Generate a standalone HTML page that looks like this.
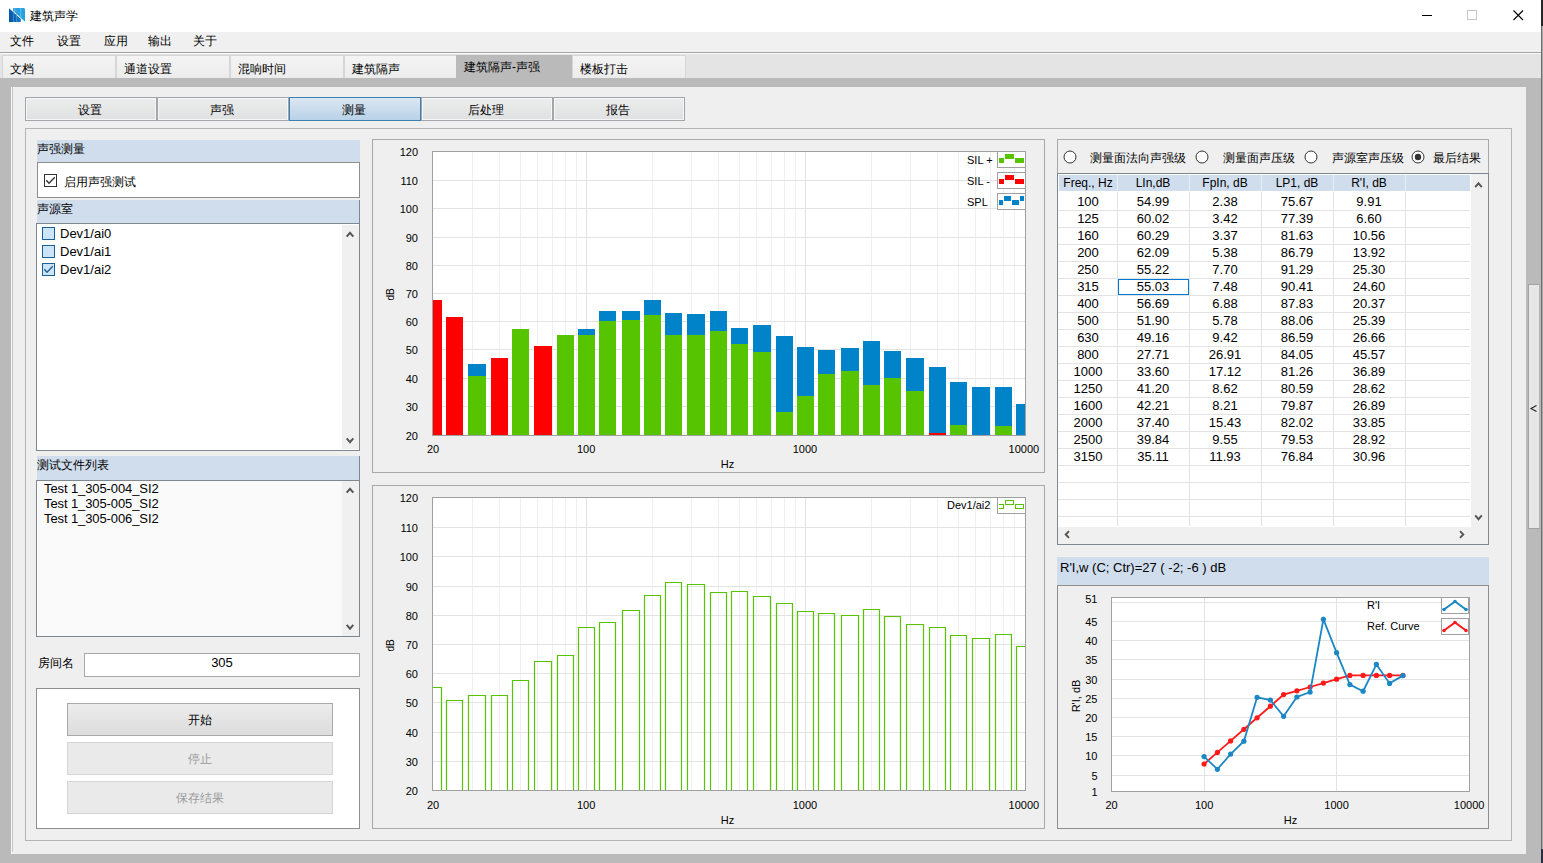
<!DOCTYPE html>
<html><head><meta charset="utf-8"><style>
html,body{margin:0;padding:0;}
body{width:1543px;height:863px;position:relative;overflow:hidden;background:#f0f0f0;font-family:"Liberation Sans",sans-serif;}
.t{position:absolute;white-space:nowrap;line-height:14px;}
</style></head><body>
<div style="position:absolute;left:0px;top:0px;width:1541px;height:32px;background:#fff"></div><svg style="position:absolute;left:9px;top:8px" width="16" height="14" viewBox="0 0 16 14">
<defs><linearGradient id="gd" x1="0" x2="1"><stop offset="0" stop-color="#0756a6"/><stop offset="1" stop-color="#137ac6"/></linearGradient></defs>
<polygon points="0,0.2 11.8,11.0 11.8,14 0,14" fill="url(#gd)"/>
<polygon points="4,2.4 4,0 15,0 16,1 16,13.8" fill="#26a2e0"/>
<rect x="4.1" y="0" width="0.8" height="14" fill="#5b9bd6" opacity="0.8"/>
<rect x="7.2" y="0" width="0.8" height="14" fill="#5b9bd6" opacity="0.8"/>
<rect x="5.4" y="0" width="0.8" height="5" fill="#7cc6ee" opacity="0.9"/>
<rect x="11.4" y="0" width="0.8" height="11" fill="#7cc6ee" opacity="0.9"/>
<polygon points="-1,-1 4,-1 4,2.5 16,13 16,15 11.8,15 11.8,10.6 0,0.3" fill="#fff" opacity="0"/>
</svg><div class="t" style="left:30px;top:9px;font-size:12px;color:#000;">建筑声学</div><div style="position:absolute;left:1422px;top:15px;width:10px;height:1px;background:#000"></div><div style="position:absolute;left:1467px;top:10px;width:10px;height:10px;border:1px solid #c6c6c6;box-sizing:border-box"></div><svg style="position:absolute;left:1513px;top:10px" width="11" height="11"><path d="M0.5 0.5 L10 10 M10 0.5 L0.5 10" stroke="#000" stroke-width="1.1"/></svg><div style="position:absolute;left:1541px;top:0px;width:1px;height:863px;background:#6e6e6e"></div><div style="position:absolute;left:1542px;top:0px;width:1px;height:863px;background:#a8a8a8"></div><div style="position:absolute;left:1541px;top:0px;width:2px;height:26px;background:#262626"></div><div style="position:absolute;left:1541px;top:849px;width:2px;height:14px;background:#2b2d42"></div><div style="position:absolute;left:0px;top:32px;width:1541px;height:20px;background:#f0f0f0"></div><div class="t" style="left:10px;top:34px;font-size:12px;color:#000;">文件</div><div class="t" style="left:57px;top:34px;font-size:12px;color:#000;">设置</div><div class="t" style="left:104px;top:34px;font-size:12px;color:#000;">应用</div><div class="t" style="left:148px;top:34px;font-size:12px;color:#000;">输出</div><div class="t" style="left:193px;top:34px;font-size:12px;color:#000;">关于</div><div style="position:absolute;left:0px;top:52px;width:1541px;height:1px;background:#a3a3a3"></div><div style="position:absolute;left:0px;top:53px;width:1541px;height:25px;background:#e4e4e4"></div><div style="position:absolute;left:0px;top:53px;width:1541px;height:1px;background:#fbfbfb"></div><div style="position:absolute;left:0px;top:78px;width:1541px;height:785px;background:#bababa"></div><div style="position:absolute;left:2px;top:55px;width:114px;height:23px;background:linear-gradient(#f4f4f4,#ececec);border:1px solid #d6d6d6;border-bottom:none;box-sizing:border-box"></div><div class="t" style="left:10px;top:62px;font-size:12px;color:#000;">文档</div><div style="position:absolute;left:116px;top:55px;width:114px;height:23px;background:linear-gradient(#f4f4f4,#ececec);border:1px solid #d6d6d6;border-bottom:none;box-sizing:border-box"></div><div class="t" style="left:124px;top:62px;font-size:12px;color:#000;">通道设置</div><div style="position:absolute;left:230px;top:55px;width:114px;height:23px;background:linear-gradient(#f4f4f4,#ececec);border:1px solid #d6d6d6;border-bottom:none;box-sizing:border-box"></div><div class="t" style="left:238px;top:62px;font-size:12px;color:#000;">混响时间</div><div style="position:absolute;left:344px;top:55px;width:114px;height:23px;background:linear-gradient(#f4f4f4,#ececec);border:1px solid #d6d6d6;border-bottom:none;box-sizing:border-box"></div><div class="t" style="left:352px;top:62px;font-size:12px;color:#000;">建筑隔声</div><div style="position:absolute;left:572px;top:55px;width:114px;height:23px;background:linear-gradient(#f4f4f4,#ececec);border:1px solid #d6d6d6;border-bottom:none;box-sizing:border-box"></div><div class="t" style="left:580px;top:62px;font-size:12px;color:#000;">楼板打击</div><div style="position:absolute;left:456px;top:55px;width:116px;height:23px;background:#bababa"></div><div class="t" style="left:464px;top:60px;font-size:12px;color:#000;">建筑隔声-声强</div><div style="position:absolute;left:11px;top:87px;width:1515px;height:767px;background:#efefef"></div><div style="position:absolute;left:11px;top:87px;width:1px;height:767px;background:#fafafa"></div><div style="position:absolute;left:12px;top:87px;width:1px;height:765px;background:#c4c4c4"></div><div style="position:absolute;left:25px;top:97px;width:132px;height:24px;background:linear-gradient(#ededed,#dfe0e1);border:1px solid #a2a6aa;box-shadow:inset 0 0 0 1px #f6f6f6;box-sizing:border-box"></div><div class="t" style="left:24px;top:103px;width:132px;text-align:center;font-size:12px;color:#000;z-index:3">设置</div><div style="position:absolute;left:157px;top:97px;width:132px;height:24px;background:linear-gradient(#ededed,#dfe0e1);border:1px solid #a2a6aa;box-shadow:inset 0 0 0 1px #f6f6f6;box-sizing:border-box"></div><div class="t" style="left:156px;top:103px;width:132px;text-align:center;font-size:12px;color:#000;z-index:3">声强</div><div style="position:absolute;left:289px;top:97px;width:132px;height:24px;background:linear-gradient(#dce7f3,#b9d1e8);border:1px solid #3c7fb1;box-sizing:border-box;z-index:2"></div><div class="t" style="left:288px;top:103px;width:132px;text-align:center;font-size:12px;color:#000;z-index:3">测量</div><div style="position:absolute;left:421px;top:97px;width:132px;height:24px;background:linear-gradient(#ededed,#dfe0e1);border:1px solid #a2a6aa;box-shadow:inset 0 0 0 1px #f6f6f6;box-sizing:border-box"></div><div class="t" style="left:420px;top:103px;width:132px;text-align:center;font-size:12px;color:#000;z-index:3">后处理</div><div style="position:absolute;left:553px;top:97px;width:132px;height:24px;background:linear-gradient(#ededed,#dfe0e1);border:1px solid #a2a6aa;box-shadow:inset 0 0 0 1px #f6f6f6;box-sizing:border-box"></div><div class="t" style="left:552px;top:103px;width:132px;text-align:center;font-size:12px;color:#000;z-index:3">报告</div><div style="position:absolute;left:25px;top:128px;width:1487px;height:713px;border:1px solid #b4b4b4;box-sizing:border-box"></div><div style="position:absolute;left:37px;top:140px;width:323px;height:22px;background:#cfdded"></div><div class="t" style="left:37px;top:142px;font-size:12px;color:#000;">声强测量</div><div style="position:absolute;left:37px;top:162px;width:323px;height:36px;background:#fff;border:1px solid #8e8e8e;box-sizing:border-box"></div><div style="position:absolute;left:44px;top:174px;width:13px;height:13px;background:#fff;border:1px solid #333;box-sizing:border-box"></div><svg style="position:absolute;left:44px;top:174px" width="13" height="13"><path d="M2.3 6.3 L5 9.2 L10.8 3.2" stroke="#333" stroke-width="1.35" fill="none"/></svg><div class="t" style="left:64px;top:175px;font-size:12px;color:#000;">启用声强测试</div><div style="position:absolute;left:37px;top:200px;width:323px;height:23px;background:#cfdded"></div><div class="t" style="left:37px;top:202px;font-size:12px;color:#000;">声源室</div><div style="position:absolute;left:36px;top:223px;width:324px;height:228px;background:#fff;border:1px solid #7f8790;box-sizing:border-box"></div><div style="position:absolute;left:359px;top:200px;width:1px;height:23px;background:#7f8790"></div><div style="position:absolute;left:342px;top:225px;width:17px;height:224px;background:#f0f0f0"></div><svg style="position:absolute;left:0;top:0;overflow:visible" width="1" height="1"><path d="M346.7 236.7 L350 232.8 L353.3 236.7" stroke="#555" stroke-width="1.9" fill="none"/></svg><svg style="position:absolute;left:0;top:0;overflow:visible" width="1" height="1"><path d="M346.7 438.3 L350 442.2 L353.3 438.3" stroke="#555" stroke-width="1.9" fill="none"/></svg><div style="position:absolute;left:42px;top:227px;width:13px;height:13px;background:#cce4f7;border:1px solid #1d5e98;box-sizing:border-box"></div><div class="t" style="left:60px;top:227px;font-size:13px;color:#000;">Dev1/ai0</div><div style="position:absolute;left:42px;top:245px;width:13px;height:13px;background:#cce4f7;border:1px solid #1d5e98;box-sizing:border-box"></div><div class="t" style="left:60px;top:245px;font-size:13px;color:#000;">Dev1/ai1</div><div style="position:absolute;left:42px;top:263px;width:13px;height:13px;background:#cce4f7;border:1px solid #1d5e98;box-sizing:border-box"></div><svg style="position:absolute;left:42px;top:263px" width="13" height="13"><path d="M2.3 6.3 L5 9.2 L10.8 3.2" stroke="#1d5e98" stroke-width="1.35" fill="none"/></svg><div class="t" style="left:60px;top:263px;font-size:13px;color:#000;">Dev1/ai2</div><div style="position:absolute;left:37px;top:456px;width:323px;height:24px;background:#cfdded"></div><div class="t" style="left:37px;top:458px;font-size:12px;color:#000;">测试文件列表</div><div style="position:absolute;left:36px;top:480px;width:324px;height:157px;background:#fafafa;border:1px solid #7f8790;box-sizing:border-box"></div><div style="position:absolute;left:342px;top:481px;width:17px;height:155px;background:#f0f0f0"></div><div style="position:absolute;left:359px;top:456px;width:1px;height:24px;background:#7f8790"></div><svg style="position:absolute;left:0;top:0;overflow:visible" width="1" height="1"><path d="M346.7 492.7 L350 488.8 L353.3 492.7" stroke="#555" stroke-width="1.9" fill="none"/></svg><svg style="position:absolute;left:0;top:0;overflow:visible" width="1" height="1"><path d="M346.7 624.8 L350 628.7 L353.3 624.8" stroke="#555" stroke-width="1.9" fill="none"/></svg><div class="t" style="left:44px;top:482px;font-size:13px;color:#000;letter-spacing:-0.1px">Test 1_305-004_SI2</div><div class="t" style="left:44px;top:497px;font-size:13px;color:#000;letter-spacing:-0.1px">Test 1_305-005_SI2</div><div class="t" style="left:44px;top:512px;font-size:13px;color:#000;letter-spacing:-0.1px">Test 1_305-006_SI2</div><div class="t" style="left:38px;top:656px;font-size:12px;color:#000;">房间名</div><div style="position:absolute;left:84px;top:653px;width:276px;height:24px;background:#fff;border:1px solid #a8a8a8;box-sizing:border-box"></div><div class="t" style="left:84px;top:656px;width:276px;text-align:center;font-size:13px;color:#000;">305</div><div style="position:absolute;left:36px;top:688px;width:324px;height:141px;background:#fff;border:1px solid #8e8e8e;box-sizing:border-box"></div><div style="position:absolute;left:67px;top:703px;width:266px;height:33px;background:linear-gradient(#ececec,#dcdcdc);border:1px solid #a9a9a9;box-sizing:border-box"></div><div class="t" style="left:67px;top:713px;width:266px;text-align:center;font-size:12px;color:#000;">开始</div><div style="position:absolute;left:67px;top:742px;width:266px;height:33px;background:#eaeaea;border:1px solid #d5d5d5;box-sizing:border-box"></div><div class="t" style="left:67px;top:752px;width:266px;text-align:center;font-size:12px;color:#9a9a9a;">停止</div><div style="position:absolute;left:67px;top:781px;width:266px;height:33px;background:#eaeaea;border:1px solid #d5d5d5;box-sizing:border-box"></div><div class="t" style="left:67px;top:791px;width:266px;text-align:center;font-size:12px;color:#9a9a9a;">保存结果</div><div style="position:absolute;left:372px;top:139px;width:673px;height:334px;border:1px solid #a8a8a8;box-sizing:border-box"></div><div style="position:absolute;left:372px;top:485px;width:673px;height:344px;border:1px solid #a8a8a8;box-sizing:border-box"></div><div style="position:absolute;left:1057px;top:139px;width:432px;height:35px;border:1px solid #a8a8a8;box-sizing:border-box"></div><svg style="position:absolute;left:1063px;top:150px" width="14" height="14"><circle cx="7" cy="7" r="6" fill="#fff" stroke="#333" stroke-width="1"/></svg><div class="t" style="left:1090px;top:151px;font-size:12px;color:#000;">测量面法向声强级</div><svg style="position:absolute;left:1195px;top:150px" width="14" height="14"><circle cx="7" cy="7" r="6" fill="#fff" stroke="#333" stroke-width="1"/></svg><div class="t" style="left:1223px;top:151px;font-size:12px;color:#000;">测量面声压级</div><svg style="position:absolute;left:1304px;top:150px" width="14" height="14"><circle cx="7" cy="7" r="6" fill="#fff" stroke="#333" stroke-width="1"/></svg><div class="t" style="left:1332px;top:151px;font-size:12px;color:#000;">声源室声压级</div><svg style="position:absolute;left:1411px;top:150px" width="14" height="14"><circle cx="7" cy="7" r="6" fill="#fff" stroke="#333" stroke-width="1"/><circle cx="7" cy="7" r="3.2" fill="#333"/></svg><div class="t" style="left:1433px;top:151px;font-size:12px;color:#000;">最后结果</div><div style="position:absolute;left:1057px;top:173px;width:432px;height:372px;background:#fff;border:1px solid #7f8790;box-sizing:border-box"></div><div style="position:absolute;left:1058px;top:174px;width:413px;height:18px;background:#fff"></div><div style="position:absolute;left:1059px;top:175px;width:411px;height:16px;background:#cfdded"></div><div class="t" style="left:1059px;top:176px;width:58px;text-align:center;font-size:12px;color:#000;">Freq., Hz</div><div style="position:absolute;left:1117px;top:175px;width:1px;height:16px;background:#e6eef7"></div><div class="t" style="left:1117px;top:176px;width:72px;text-align:center;font-size:12px;color:#000;">LIn,dB</div><div style="position:absolute;left:1189px;top:175px;width:1px;height:16px;background:#e6eef7"></div><div class="t" style="left:1189px;top:176px;width:72px;text-align:center;font-size:12px;color:#000;">FpIn, dB</div><div style="position:absolute;left:1261px;top:175px;width:1px;height:16px;background:#e6eef7"></div><div class="t" style="left:1261px;top:176px;width:72px;text-align:center;font-size:12px;color:#000;">LP1, dB</div><div style="position:absolute;left:1333px;top:175px;width:1px;height:16px;background:#e6eef7"></div><div class="t" style="left:1333px;top:176px;width:72px;text-align:center;font-size:12px;color:#000;">R'I, dB</div><div style="position:absolute;left:1405px;top:175px;width:1px;height:16px;background:#e6eef7"></div><div class="t" style="left:1405px;top:176px;width:65px;text-align:center;font-size:12px;color:#000;"></div><div style="position:absolute;left:1058px;top:210px;width:412px;height:1px;background:#e3e3e3"></div><div style="position:absolute;left:1058px;top:227px;width:412px;height:1px;background:#e3e3e3"></div><div style="position:absolute;left:1058px;top:244px;width:412px;height:1px;background:#e3e3e3"></div><div style="position:absolute;left:1058px;top:261px;width:412px;height:1px;background:#e3e3e3"></div><div style="position:absolute;left:1058px;top:278px;width:412px;height:1px;background:#e3e3e3"></div><div style="position:absolute;left:1058px;top:295px;width:412px;height:1px;background:#e3e3e3"></div><div style="position:absolute;left:1058px;top:312px;width:412px;height:1px;background:#e3e3e3"></div><div style="position:absolute;left:1058px;top:329px;width:412px;height:1px;background:#e3e3e3"></div><div style="position:absolute;left:1058px;top:346px;width:412px;height:1px;background:#e3e3e3"></div><div style="position:absolute;left:1058px;top:363px;width:412px;height:1px;background:#e3e3e3"></div><div style="position:absolute;left:1058px;top:380px;width:412px;height:1px;background:#e3e3e3"></div><div style="position:absolute;left:1058px;top:397px;width:412px;height:1px;background:#e3e3e3"></div><div style="position:absolute;left:1058px;top:414px;width:412px;height:1px;background:#e3e3e3"></div><div style="position:absolute;left:1058px;top:431px;width:412px;height:1px;background:#e3e3e3"></div><div style="position:absolute;left:1058px;top:448px;width:412px;height:1px;background:#e3e3e3"></div><div style="position:absolute;left:1058px;top:465px;width:412px;height:1px;background:#e3e3e3"></div><div style="position:absolute;left:1058px;top:482px;width:412px;height:1px;background:#e3e3e3"></div><div style="position:absolute;left:1058px;top:499px;width:412px;height:1px;background:#e3e3e3"></div><div style="position:absolute;left:1058px;top:516px;width:412px;height:1px;background:#e3e3e3"></div><div style="position:absolute;left:1117px;top:192px;width:1px;height:334px;background:#e3e3e3"></div><div style="position:absolute;left:1189px;top:192px;width:1px;height:334px;background:#e3e3e3"></div><div style="position:absolute;left:1261px;top:192px;width:1px;height:334px;background:#e3e3e3"></div><div style="position:absolute;left:1333px;top:192px;width:1px;height:334px;background:#e3e3e3"></div><div style="position:absolute;left:1405px;top:192px;width:1px;height:334px;background:#e3e3e3"></div><div class="t" style="left:1059px;top:195px;width:58px;text-align:center;font-size:13px;color:#000;">100</div><div class="t" style="left:1117px;top:195px;width:72px;text-align:center;font-size:13px;color:#000;">54.99</div><div class="t" style="left:1189px;top:195px;width:72px;text-align:center;font-size:13px;color:#000;">2.38</div><div class="t" style="left:1261px;top:195px;width:72px;text-align:center;font-size:13px;color:#000;">75.67</div><div class="t" style="left:1333px;top:195px;width:72px;text-align:center;font-size:13px;color:#000;">9.91</div><div class="t" style="left:1059px;top:212px;width:58px;text-align:center;font-size:13px;color:#000;">125</div><div class="t" style="left:1117px;top:212px;width:72px;text-align:center;font-size:13px;color:#000;">60.02</div><div class="t" style="left:1189px;top:212px;width:72px;text-align:center;font-size:13px;color:#000;">3.42</div><div class="t" style="left:1261px;top:212px;width:72px;text-align:center;font-size:13px;color:#000;">77.39</div><div class="t" style="left:1333px;top:212px;width:72px;text-align:center;font-size:13px;color:#000;">6.60</div><div class="t" style="left:1059px;top:229px;width:58px;text-align:center;font-size:13px;color:#000;">160</div><div class="t" style="left:1117px;top:229px;width:72px;text-align:center;font-size:13px;color:#000;">60.29</div><div class="t" style="left:1189px;top:229px;width:72px;text-align:center;font-size:13px;color:#000;">3.37</div><div class="t" style="left:1261px;top:229px;width:72px;text-align:center;font-size:13px;color:#000;">81.63</div><div class="t" style="left:1333px;top:229px;width:72px;text-align:center;font-size:13px;color:#000;">10.56</div><div class="t" style="left:1059px;top:246px;width:58px;text-align:center;font-size:13px;color:#000;">200</div><div class="t" style="left:1117px;top:246px;width:72px;text-align:center;font-size:13px;color:#000;">62.09</div><div class="t" style="left:1189px;top:246px;width:72px;text-align:center;font-size:13px;color:#000;">5.38</div><div class="t" style="left:1261px;top:246px;width:72px;text-align:center;font-size:13px;color:#000;">86.79</div><div class="t" style="left:1333px;top:246px;width:72px;text-align:center;font-size:13px;color:#000;">13.92</div><div class="t" style="left:1059px;top:263px;width:58px;text-align:center;font-size:13px;color:#000;">250</div><div class="t" style="left:1117px;top:263px;width:72px;text-align:center;font-size:13px;color:#000;">55.22</div><div class="t" style="left:1189px;top:263px;width:72px;text-align:center;font-size:13px;color:#000;">7.70</div><div class="t" style="left:1261px;top:263px;width:72px;text-align:center;font-size:13px;color:#000;">91.29</div><div class="t" style="left:1333px;top:263px;width:72px;text-align:center;font-size:13px;color:#000;">25.30</div><div class="t" style="left:1059px;top:280px;width:58px;text-align:center;font-size:13px;color:#000;">315</div><div class="t" style="left:1117px;top:280px;width:72px;text-align:center;font-size:13px;color:#000;">55.03</div><div class="t" style="left:1189px;top:280px;width:72px;text-align:center;font-size:13px;color:#000;">7.48</div><div class="t" style="left:1261px;top:280px;width:72px;text-align:center;font-size:13px;color:#000;">90.41</div><div class="t" style="left:1333px;top:280px;width:72px;text-align:center;font-size:13px;color:#000;">24.60</div><div class="t" style="left:1059px;top:297px;width:58px;text-align:center;font-size:13px;color:#000;">400</div><div class="t" style="left:1117px;top:297px;width:72px;text-align:center;font-size:13px;color:#000;">56.69</div><div class="t" style="left:1189px;top:297px;width:72px;text-align:center;font-size:13px;color:#000;">6.88</div><div class="t" style="left:1261px;top:297px;width:72px;text-align:center;font-size:13px;color:#000;">87.83</div><div class="t" style="left:1333px;top:297px;width:72px;text-align:center;font-size:13px;color:#000;">20.37</div><div class="t" style="left:1059px;top:314px;width:58px;text-align:center;font-size:13px;color:#000;">500</div><div class="t" style="left:1117px;top:314px;width:72px;text-align:center;font-size:13px;color:#000;">51.90</div><div class="t" style="left:1189px;top:314px;width:72px;text-align:center;font-size:13px;color:#000;">5.78</div><div class="t" style="left:1261px;top:314px;width:72px;text-align:center;font-size:13px;color:#000;">88.06</div><div class="t" style="left:1333px;top:314px;width:72px;text-align:center;font-size:13px;color:#000;">25.39</div><div class="t" style="left:1059px;top:331px;width:58px;text-align:center;font-size:13px;color:#000;">630</div><div class="t" style="left:1117px;top:331px;width:72px;text-align:center;font-size:13px;color:#000;">49.16</div><div class="t" style="left:1189px;top:331px;width:72px;text-align:center;font-size:13px;color:#000;">9.42</div><div class="t" style="left:1261px;top:331px;width:72px;text-align:center;font-size:13px;color:#000;">86.59</div><div class="t" style="left:1333px;top:331px;width:72px;text-align:center;font-size:13px;color:#000;">26.66</div><div class="t" style="left:1059px;top:348px;width:58px;text-align:center;font-size:13px;color:#000;">800</div><div class="t" style="left:1117px;top:348px;width:72px;text-align:center;font-size:13px;color:#000;">27.71</div><div class="t" style="left:1189px;top:348px;width:72px;text-align:center;font-size:13px;color:#000;">26.91</div><div class="t" style="left:1261px;top:348px;width:72px;text-align:center;font-size:13px;color:#000;">84.05</div><div class="t" style="left:1333px;top:348px;width:72px;text-align:center;font-size:13px;color:#000;">45.57</div><div class="t" style="left:1059px;top:365px;width:58px;text-align:center;font-size:13px;color:#000;">1000</div><div class="t" style="left:1117px;top:365px;width:72px;text-align:center;font-size:13px;color:#000;">33.60</div><div class="t" style="left:1189px;top:365px;width:72px;text-align:center;font-size:13px;color:#000;">17.12</div><div class="t" style="left:1261px;top:365px;width:72px;text-align:center;font-size:13px;color:#000;">81.26</div><div class="t" style="left:1333px;top:365px;width:72px;text-align:center;font-size:13px;color:#000;">36.89</div><div class="t" style="left:1059px;top:382px;width:58px;text-align:center;font-size:13px;color:#000;">1250</div><div class="t" style="left:1117px;top:382px;width:72px;text-align:center;font-size:13px;color:#000;">41.20</div><div class="t" style="left:1189px;top:382px;width:72px;text-align:center;font-size:13px;color:#000;">8.62</div><div class="t" style="left:1261px;top:382px;width:72px;text-align:center;font-size:13px;color:#000;">80.59</div><div class="t" style="left:1333px;top:382px;width:72px;text-align:center;font-size:13px;color:#000;">28.62</div><div class="t" style="left:1059px;top:399px;width:58px;text-align:center;font-size:13px;color:#000;">1600</div><div class="t" style="left:1117px;top:399px;width:72px;text-align:center;font-size:13px;color:#000;">42.21</div><div class="t" style="left:1189px;top:399px;width:72px;text-align:center;font-size:13px;color:#000;">8.21</div><div class="t" style="left:1261px;top:399px;width:72px;text-align:center;font-size:13px;color:#000;">79.87</div><div class="t" style="left:1333px;top:399px;width:72px;text-align:center;font-size:13px;color:#000;">26.89</div><div class="t" style="left:1059px;top:416px;width:58px;text-align:center;font-size:13px;color:#000;">2000</div><div class="t" style="left:1117px;top:416px;width:72px;text-align:center;font-size:13px;color:#000;">37.40</div><div class="t" style="left:1189px;top:416px;width:72px;text-align:center;font-size:13px;color:#000;">15.43</div><div class="t" style="left:1261px;top:416px;width:72px;text-align:center;font-size:13px;color:#000;">82.02</div><div class="t" style="left:1333px;top:416px;width:72px;text-align:center;font-size:13px;color:#000;">33.85</div><div class="t" style="left:1059px;top:433px;width:58px;text-align:center;font-size:13px;color:#000;">2500</div><div class="t" style="left:1117px;top:433px;width:72px;text-align:center;font-size:13px;color:#000;">39.84</div><div class="t" style="left:1189px;top:433px;width:72px;text-align:center;font-size:13px;color:#000;">9.55</div><div class="t" style="left:1261px;top:433px;width:72px;text-align:center;font-size:13px;color:#000;">79.53</div><div class="t" style="left:1333px;top:433px;width:72px;text-align:center;font-size:13px;color:#000;">28.92</div><div class="t" style="left:1059px;top:450px;width:58px;text-align:center;font-size:13px;color:#000;">3150</div><div class="t" style="left:1117px;top:450px;width:72px;text-align:center;font-size:13px;color:#000;">35.11</div><div class="t" style="left:1189px;top:450px;width:72px;text-align:center;font-size:13px;color:#000;">11.93</div><div class="t" style="left:1261px;top:450px;width:72px;text-align:center;font-size:13px;color:#000;">76.84</div><div class="t" style="left:1333px;top:450px;width:72px;text-align:center;font-size:13px;color:#000;">30.96</div><div style="position:absolute;left:1118px;top:279px;width:71px;height:16px;border:1px solid #0078d7;box-sizing:border-box"></div><div style="position:absolute;left:1471px;top:174px;width:17px;height:353px;background:#f0f0f0"></div><div style="position:absolute;left:1058px;top:527px;width:430px;height:17px;background:#f0f0f0"></div><svg style="position:absolute;left:0;top:0;overflow:visible" width="1" height="1"><path d="M1475.2 187.2 L1478.5 183.3 L1481.8 187.2" stroke="#555" stroke-width="1.9" fill="none"/></svg><svg style="position:absolute;left:0;top:0;overflow:visible" width="1" height="1"><path d="M1475.2 515.3 L1478.5 519.2 L1481.8 515.3" stroke="#555" stroke-width="1.9" fill="none"/></svg><svg style="position:absolute;left:0;top:0;overflow:visible" width="1" height="1"><path d="M1069 531.2 L1065.7 534.5 L1069 537.8" stroke="#555" stroke-width="1.9" fill="none"/></svg><svg style="position:absolute;left:0;top:0;overflow:visible" width="1" height="1"><path d="M1460 531.2 L1463.3 534.5 L1460 537.8" stroke="#555" stroke-width="1.9" fill="none"/></svg><div style="position:absolute;left:1057px;top:557px;width:432px;height:28px;background:#cfdded"></div><div class="t" style="left:1060px;top:561px;font-size:13px;color:#000;">R'I,w (C; Ctr)=27 ( -2; -6 ) dB</div><div style="position:absolute;left:1057px;top:585px;width:432px;height:244px;border:1px solid #8e8e8e;box-sizing:border-box"></div><div style="position:absolute;left:1528px;top:284px;width:12px;height:245px;background:#e6e6e6;border:1px solid #a3a3a3;border-right-color:#b4b4b4;box-sizing:border-box"></div><svg style="position:absolute;left:0;top:0;overflow:visible" width="1" height="1"><path d="M1536.5 405.5 L1531 408.5 L1536.5 411.5" stroke="#222" stroke-width="1.1" fill="none"/></svg>
<svg style="position:absolute;left:0;top:0;font-family:'Liberation Sans',sans-serif" width="1543" height="863"><rect x="432" y="151" width="594" height="284" fill="#fff"/><line x1="472.5" y1="151" x2="472.5" y2="435" stroke="#efefef" stroke-width="1"/><line x1="499.5" y1="151" x2="499.5" y2="435" stroke="#efefef" stroke-width="1"/><line x1="520.5" y1="151" x2="520.5" y2="435" stroke="#efefef" stroke-width="1"/><line x1="537.5" y1="151" x2="537.5" y2="435" stroke="#efefef" stroke-width="1"/><line x1="552.5" y1="151" x2="552.5" y2="435" stroke="#efefef" stroke-width="1"/><line x1="565.5" y1="151" x2="565.5" y2="435" stroke="#efefef" stroke-width="1"/><line x1="576.5" y1="151" x2="576.5" y2="435" stroke="#efefef" stroke-width="1"/><line x1="586.5" y1="151" x2="586.5" y2="435" stroke="#e3e3e3" stroke-width="1"/><line x1="652.5" y1="151" x2="652.5" y2="435" stroke="#efefef" stroke-width="1"/><line x1="691.5" y1="151" x2="691.5" y2="435" stroke="#efefef" stroke-width="1"/><line x1="718.5" y1="151" x2="718.5" y2="435" stroke="#efefef" stroke-width="1"/><line x1="739.5" y1="151" x2="739.5" y2="435" stroke="#efefef" stroke-width="1"/><line x1="756.5" y1="151" x2="756.5" y2="435" stroke="#efefef" stroke-width="1"/><line x1="771.5" y1="151" x2="771.5" y2="435" stroke="#efefef" stroke-width="1"/><line x1="784.5" y1="151" x2="784.5" y2="435" stroke="#efefef" stroke-width="1"/><line x1="795.5" y1="151" x2="795.5" y2="435" stroke="#efefef" stroke-width="1"/><line x1="805.5" y1="151" x2="805.5" y2="435" stroke="#e3e3e3" stroke-width="1"/><line x1="871.5" y1="151" x2="871.5" y2="435" stroke="#efefef" stroke-width="1"/><line x1="910.5" y1="151" x2="910.5" y2="435" stroke="#efefef" stroke-width="1"/><line x1="937.5" y1="151" x2="937.5" y2="435" stroke="#efefef" stroke-width="1"/><line x1="958.5" y1="151" x2="958.5" y2="435" stroke="#efefef" stroke-width="1"/><line x1="975.5" y1="151" x2="975.5" y2="435" stroke="#efefef" stroke-width="1"/><line x1="990.5" y1="151" x2="990.5" y2="435" stroke="#efefef" stroke-width="1"/><line x1="1003.5" y1="151" x2="1003.5" y2="435" stroke="#efefef" stroke-width="1"/><line x1="1014.5" y1="151" x2="1014.5" y2="435" stroke="#efefef" stroke-width="1"/><line x1="432" y1="180.5" x2="1026" y2="180.5" stroke="#e3e3e3" stroke-width="1"/><line x1="432" y1="208.5" x2="1026" y2="208.5" stroke="#e3e3e3" stroke-width="1"/><line x1="432" y1="237.5" x2="1026" y2="237.5" stroke="#e3e3e3" stroke-width="1"/><line x1="432" y1="265.5" x2="1026" y2="265.5" stroke="#e3e3e3" stroke-width="1"/><line x1="432" y1="293.5" x2="1026" y2="293.5" stroke="#e3e3e3" stroke-width="1"/><line x1="432" y1="321.5" x2="1026" y2="321.5" stroke="#e3e3e3" stroke-width="1"/><line x1="432" y1="349.5" x2="1026" y2="349.5" stroke="#e3e3e3" stroke-width="1"/><line x1="432" y1="378.5" x2="1026" y2="378.5" stroke="#e3e3e3" stroke-width="1"/><line x1="432" y1="406.5" x2="1026" y2="406.5" stroke="#e3e3e3" stroke-width="1"/><g shape-rendering="crispEdges"><rect x="433" y="300" width="9" height="135" fill="#ff0000"/><rect x="446" y="317" width="17" height="118" fill="#ff0000"/><rect x="468" y="364" width="18" height="71" fill="#0083c8"/><rect x="468" y="376" width="18" height="59" fill="#56c500"/><rect x="491" y="358" width="17" height="77" fill="#ff0000"/><rect x="512" y="329" width="17" height="106" fill="#56c500"/><rect x="534" y="346" width="18" height="89" fill="#ff0000"/><rect x="557" y="335" width="17" height="100" fill="#56c500"/><rect x="578" y="329" width="17" height="106" fill="#0083c8"/><rect x="578" y="335" width="17" height="100" fill="#56c500"/><rect x="599" y="311" width="17" height="124" fill="#0083c8"/><rect x="599" y="321" width="17" height="114" fill="#56c500"/><rect x="622" y="311" width="18" height="124" fill="#0083c8"/><rect x="622" y="320" width="18" height="115" fill="#56c500"/><rect x="644" y="300" width="17" height="135" fill="#0083c8"/><rect x="644" y="315" width="17" height="120" fill="#56c500"/><rect x="665" y="313" width="17" height="122" fill="#0083c8"/><rect x="665" y="335" width="17" height="100" fill="#56c500"/><rect x="687" y="314" width="18" height="121" fill="#0083c8"/><rect x="687" y="335" width="18" height="100" fill="#56c500"/><rect x="710" y="311" width="17" height="124" fill="#0083c8"/><rect x="710" y="331" width="17" height="104" fill="#56c500"/><rect x="731" y="328" width="17" height="107" fill="#0083c8"/><rect x="731" y="344" width="17" height="91" fill="#56c500"/><rect x="753" y="325" width="18" height="110" fill="#0083c8"/><rect x="753" y="352" width="18" height="83" fill="#56c500"/><rect x="776" y="336" width="17" height="99" fill="#0083c8"/><rect x="776" y="412" width="17" height="23" fill="#56c500"/><rect x="797" y="347" width="17" height="88" fill="#0083c8"/><rect x="797" y="396" width="17" height="39" fill="#56c500"/><rect x="818" y="350" width="17" height="85" fill="#0083c8"/><rect x="818" y="374" width="17" height="61" fill="#56c500"/><rect x="841" y="348" width="18" height="87" fill="#0083c8"/><rect x="841" y="371" width="18" height="64" fill="#56c500"/><rect x="863" y="341" width="17" height="94" fill="#0083c8"/><rect x="863" y="385" width="17" height="50" fill="#56c500"/><rect x="884" y="351" width="17" height="84" fill="#0083c8"/><rect x="884" y="378" width="17" height="57" fill="#56c500"/><rect x="906" y="358" width="18" height="77" fill="#0083c8"/><rect x="906" y="391" width="18" height="44" fill="#56c500"/><rect x="929" y="367" width="17" height="68" fill="#0083c8"/><rect x="929" y="433" width="17" height="2" fill="#ff0000"/><rect x="950" y="382" width="17" height="53" fill="#0083c8"/><rect x="950" y="425" width="17" height="10" fill="#56c500"/><rect x="972" y="387" width="18" height="48" fill="#0083c8"/><rect x="995" y="387" width="17" height="48" fill="#0083c8"/><rect x="995" y="426" width="17" height="9" fill="#56c500"/><rect x="1016" y="404" width="9" height="31" fill="#0083c8"/><path d="M432.5 435 L432.5 151.5 L1025.5 151.5 L1025.5 435.5 L432 435.5" fill="none" stroke="#a0a0a0" stroke-width="1"/></g><text x="418" y="156" font-size="11" text-anchor="end" fill="#000" >120</text><text x="418" y="185" font-size="11" text-anchor="end" fill="#000" >110</text><text x="418" y="213" font-size="11" text-anchor="end" fill="#000" >100</text><text x="418" y="242" font-size="11" text-anchor="end" fill="#000" >90</text><text x="418" y="270" font-size="11" text-anchor="end" fill="#000" >80</text><text x="418" y="298" font-size="11" text-anchor="end" fill="#000" >70</text><text x="418" y="326" font-size="11" text-anchor="end" fill="#000" >60</text><text x="418" y="354" font-size="11" text-anchor="end" fill="#000" >50</text><text x="418" y="383" font-size="11" text-anchor="end" fill="#000" >40</text><text x="418" y="411" font-size="11" text-anchor="end" fill="#000" >30</text><text x="418" y="440" font-size="11" text-anchor="end" fill="#000" >20</text><text x="433.1" y="453" font-size="11" text-anchor="middle" fill="#000" >20</text><text x="586.1045339491545" y="453" font-size="11" text-anchor="middle" fill="#000" >100</text><text x="805.0045339491546" y="453" font-size="11" text-anchor="middle" fill="#000" >1000</text><text x="1023.9045339491546" y="453" font-size="11" text-anchor="middle" fill="#000" >10000</text><text x="727.5" y="468" font-size="11" text-anchor="middle" fill="#000" >Hz</text><text transform="translate(394,294.5) rotate(-90)" font-size="10" text-anchor="middle">dB</text><rect x="997.5" y="151.5" width="28" height="16" fill="#fff" stroke="#a0a0a0" stroke-width="1" shape-rendering="crispEdges"/><g shape-rendering="crispEdges" fill="#56c500"><rect x="999" y="158" width="5" height="5"/><rect x="1005" y="154" width="9" height="5"/><rect x="1015" y="158" width="9" height="5"/></g><text x="967" y="163.5" font-size="11" text-anchor="start" fill="#000" >SIL +</text><rect x="997.5" y="172.5" width="28" height="16" fill="#fff" stroke="#a0a0a0" stroke-width="1" shape-rendering="crispEdges"/><g shape-rendering="crispEdges" fill="#ff0000"><rect x="999" y="179" width="5" height="5"/><rect x="1005" y="175" width="9" height="5"/><rect x="1015" y="179" width="9" height="5"/></g><text x="967" y="184.5" font-size="11" text-anchor="start" fill="#000" >SIL -</text><rect x="997.5" y="193.5" width="28" height="16" fill="#fff" stroke="#a0a0a0" stroke-width="1" shape-rendering="crispEdges"/><g shape-rendering="crispEdges" fill="#0083c8"><rect x="999" y="200" width="4" height="5"/><rect x="1004" y="196" width="7" height="5"/><rect x="1012" y="200" width="7" height="5"/><rect x="1020" y="196" width="4" height="5"/></g><text x="967" y="205.5" font-size="11" text-anchor="start" fill="#000" >SPL</text><rect x="432" y="497" width="594" height="293" fill="#fff"/><line x1="472.5" y1="497" x2="472.5" y2="790" stroke="#efefef" stroke-width="1"/><line x1="499.5" y1="497" x2="499.5" y2="790" stroke="#efefef" stroke-width="1"/><line x1="520.5" y1="497" x2="520.5" y2="790" stroke="#efefef" stroke-width="1"/><line x1="537.5" y1="497" x2="537.5" y2="790" stroke="#efefef" stroke-width="1"/><line x1="552.5" y1="497" x2="552.5" y2="790" stroke="#efefef" stroke-width="1"/><line x1="565.5" y1="497" x2="565.5" y2="790" stroke="#efefef" stroke-width="1"/><line x1="576.5" y1="497" x2="576.5" y2="790" stroke="#efefef" stroke-width="1"/><line x1="586.5" y1="497" x2="586.5" y2="790" stroke="#e3e3e3" stroke-width="1"/><line x1="652.5" y1="497" x2="652.5" y2="790" stroke="#efefef" stroke-width="1"/><line x1="691.5" y1="497" x2="691.5" y2="790" stroke="#efefef" stroke-width="1"/><line x1="718.5" y1="497" x2="718.5" y2="790" stroke="#efefef" stroke-width="1"/><line x1="739.5" y1="497" x2="739.5" y2="790" stroke="#efefef" stroke-width="1"/><line x1="756.5" y1="497" x2="756.5" y2="790" stroke="#efefef" stroke-width="1"/><line x1="771.5" y1="497" x2="771.5" y2="790" stroke="#efefef" stroke-width="1"/><line x1="784.5" y1="497" x2="784.5" y2="790" stroke="#efefef" stroke-width="1"/><line x1="795.5" y1="497" x2="795.5" y2="790" stroke="#efefef" stroke-width="1"/><line x1="805.5" y1="497" x2="805.5" y2="790" stroke="#e3e3e3" stroke-width="1"/><line x1="871.5" y1="497" x2="871.5" y2="790" stroke="#efefef" stroke-width="1"/><line x1="910.5" y1="497" x2="910.5" y2="790" stroke="#efefef" stroke-width="1"/><line x1="937.5" y1="497" x2="937.5" y2="790" stroke="#efefef" stroke-width="1"/><line x1="958.5" y1="497" x2="958.5" y2="790" stroke="#efefef" stroke-width="1"/><line x1="975.5" y1="497" x2="975.5" y2="790" stroke="#efefef" stroke-width="1"/><line x1="990.5" y1="497" x2="990.5" y2="790" stroke="#efefef" stroke-width="1"/><line x1="1003.5" y1="497" x2="1003.5" y2="790" stroke="#efefef" stroke-width="1"/><line x1="1014.5" y1="497" x2="1014.5" y2="790" stroke="#efefef" stroke-width="1"/><line x1="432" y1="527.5" x2="1026" y2="527.5" stroke="#e3e3e3" stroke-width="1"/><line x1="432" y1="556.5" x2="1026" y2="556.5" stroke="#e3e3e3" stroke-width="1"/><line x1="432" y1="586.5" x2="1026" y2="586.5" stroke="#e3e3e3" stroke-width="1"/><line x1="432" y1="615.5" x2="1026" y2="615.5" stroke="#e3e3e3" stroke-width="1"/><line x1="432" y1="644.5" x2="1026" y2="644.5" stroke="#e3e3e3" stroke-width="1"/><line x1="432" y1="673.5" x2="1026" y2="673.5" stroke="#e3e3e3" stroke-width="1"/><line x1="432" y1="702.5" x2="1026" y2="702.5" stroke="#e3e3e3" stroke-width="1"/><line x1="432" y1="732.5" x2="1026" y2="732.5" stroke="#e3e3e3" stroke-width="1"/><line x1="432" y1="761.5" x2="1026" y2="761.5" stroke="#e3e3e3" stroke-width="1"/><path d="M432 687.5 L441.5 687.5 L441.5 790" fill="none" stroke="#56c500" stroke-width="1.2"/><path d="M446.5 790 L446.5 700.5 L462.5 700.5 L462.5 790" fill="none" stroke="#56c500" stroke-width="1.2"/><path d="M468.5 790 L468.5 695.5 L485.5 695.5 L485.5 790" fill="none" stroke="#56c500" stroke-width="1.2"/><path d="M491.5 790 L491.5 695.5 L507.5 695.5 L507.5 790" fill="none" stroke="#56c500" stroke-width="1.2"/><path d="M512.5 790 L512.5 680.5 L528.5 680.5 L528.5 790" fill="none" stroke="#56c500" stroke-width="1.2"/><path d="M534.5 790 L534.5 661.5 L551.5 661.5 L551.5 790" fill="none" stroke="#56c500" stroke-width="1.2"/><path d="M557.5 790 L557.5 655.5 L573.5 655.5 L573.5 790" fill="none" stroke="#56c500" stroke-width="1.2"/><path d="M578.5 790 L578.5 627.5 L594.5 627.5 L594.5 790" fill="none" stroke="#56c500" stroke-width="1.2"/><path d="M599.5 790 L599.5 622.5 L615.5 622.5 L615.5 790" fill="none" stroke="#56c500" stroke-width="1.2"/><path d="M622.5 790 L622.5 610.5 L639.5 610.5 L639.5 790" fill="none" stroke="#56c500" stroke-width="1.2"/><path d="M644.5 790 L644.5 595.5 L660.5 595.5 L660.5 790" fill="none" stroke="#56c500" stroke-width="1.2"/><path d="M665.5 790 L665.5 582.5 L681.5 582.5 L681.5 790" fill="none" stroke="#56c500" stroke-width="1.2"/><path d="M687.5 790 L687.5 584.5 L704.5 584.5 L704.5 790" fill="none" stroke="#56c500" stroke-width="1.2"/><path d="M710.5 790 L710.5 592.5 L726.5 592.5 L726.5 790" fill="none" stroke="#56c500" stroke-width="1.2"/><path d="M731.5 790 L731.5 591.5 L747.5 591.5 L747.5 790" fill="none" stroke="#56c500" stroke-width="1.2"/><path d="M753.5 790 L753.5 596.5 L770.5 596.5 L770.5 790" fill="none" stroke="#56c500" stroke-width="1.2"/><path d="M776.5 790 L776.5 603.5 L792.5 603.5 L792.5 790" fill="none" stroke="#56c500" stroke-width="1.2"/><path d="M797.5 790 L797.5 611.5 L813.5 611.5 L813.5 790" fill="none" stroke="#56c500" stroke-width="1.2"/><path d="M818.5 790 L818.5 613.5 L834.5 613.5 L834.5 790" fill="none" stroke="#56c500" stroke-width="1.2"/><path d="M841.5 790 L841.5 615.5 L858.5 615.5 L858.5 790" fill="none" stroke="#56c500" stroke-width="1.2"/><path d="M863.5 790 L863.5 609.5 L879.5 609.5 L879.5 790" fill="none" stroke="#56c500" stroke-width="1.2"/><path d="M884.5 790 L884.5 616.5 L900.5 616.5 L900.5 790" fill="none" stroke="#56c500" stroke-width="1.2"/><path d="M906.5 790 L906.5 624.5 L923.5 624.5 L923.5 790" fill="none" stroke="#56c500" stroke-width="1.2"/><path d="M929.5 790 L929.5 627.5 L945.5 627.5 L945.5 790" fill="none" stroke="#56c500" stroke-width="1.2"/><path d="M950.5 790 L950.5 635.5 L966.5 635.5 L966.5 790" fill="none" stroke="#56c500" stroke-width="1.2"/><path d="M972.5 790 L972.5 638.5 L989.5 638.5 L989.5 790" fill="none" stroke="#56c500" stroke-width="1.2"/><path d="M995.5 790 L995.5 634.5 L1011.5 634.5 L1011.5 790" fill="none" stroke="#56c500" stroke-width="1.2"/><path d="M1016.5 790 L1016.5 646.5 L1026 646.5" fill="none" stroke="#56c500" stroke-width="1.2"/><path d="M432.5 790 L432.5 497.5 L1025.5 497.5 L1025.5 790.5 L432 790.5" fill="none" stroke="#a0a0a0" stroke-width="1" shape-rendering="crispEdges"/><text x="418" y="502" font-size="11" text-anchor="end" fill="#000" >120</text><text x="418" y="532" font-size="11" text-anchor="end" fill="#000" >110</text><text x="418" y="561" font-size="11" text-anchor="end" fill="#000" >100</text><text x="418" y="591" font-size="11" text-anchor="end" fill="#000" >90</text><text x="418" y="620" font-size="11" text-anchor="end" fill="#000" >80</text><text x="418" y="649" font-size="11" text-anchor="end" fill="#000" >70</text><text x="418" y="678" font-size="11" text-anchor="end" fill="#000" >60</text><text x="418" y="707" font-size="11" text-anchor="end" fill="#000" >50</text><text x="418" y="737" font-size="11" text-anchor="end" fill="#000" >40</text><text x="418" y="766" font-size="11" text-anchor="end" fill="#000" >30</text><text x="418" y="795" font-size="11" text-anchor="end" fill="#000" >20</text><text x="433.1" y="808.5" font-size="11" text-anchor="middle" fill="#000" >20</text><text x="586.1045339491545" y="808.5" font-size="11" text-anchor="middle" fill="#000" >100</text><text x="805.0045339491546" y="808.5" font-size="11" text-anchor="middle" fill="#000" >1000</text><text x="1023.9045339491546" y="808.5" font-size="11" text-anchor="middle" fill="#000" >10000</text><text x="727.5" y="824" font-size="11" text-anchor="middle" fill="#000" >Hz</text><text transform="translate(394,645.5) rotate(-90)" font-size="10" text-anchor="middle">dB</text><rect x="997.5" y="497.5" width="28" height="16" fill="#fff" stroke="#a0a0a0" stroke-width="1" shape-rendering="crispEdges"/><g shape-rendering="crispEdges" fill="none" stroke="#56c500" stroke-width="1"><path d="M999 504.5 H1003.5 V508.5 H999"/><rect x="1005.5" y="500.5" width="8" height="4"/><rect x="1015.5" y="504.5" width="8" height="4"/></g><text x="947" y="509" font-size="11" text-anchor="start" fill="#000" >Dev1/ai2</text><rect x="1111" y="597" width="359" height="195" fill="#fff"/><line x1="1111" y1="602.5" x2="1470" y2="602.5" stroke="#e3e3e3" stroke-width="1"/><line x1="1111" y1="621.5" x2="1470" y2="621.5" stroke="#e3e3e3" stroke-width="1"/><line x1="1111" y1="640.5" x2="1470" y2="640.5" stroke="#e3e3e3" stroke-width="1"/><line x1="1111" y1="659.5" x2="1470" y2="659.5" stroke="#e3e3e3" stroke-width="1"/><line x1="1111" y1="679.5" x2="1470" y2="679.5" stroke="#e3e3e3" stroke-width="1"/><line x1="1111" y1="698.5" x2="1470" y2="698.5" stroke="#e3e3e3" stroke-width="1"/><line x1="1111" y1="717.5" x2="1470" y2="717.5" stroke="#e3e3e3" stroke-width="1"/><line x1="1111" y1="736.5" x2="1470" y2="736.5" stroke="#e3e3e3" stroke-width="1"/><line x1="1111" y1="755.5" x2="1470" y2="755.5" stroke="#e3e3e3" stroke-width="1"/><line x1="1111" y1="775.5" x2="1470" y2="775.5" stroke="#e3e3e3" stroke-width="1"/><line x1="1204.5" y1="597" x2="1204.5" y2="791" stroke="#e3e3e3" stroke-width="1"/><line x1="1336.5" y1="597" x2="1336.5" y2="791" stroke="#e3e3e3" stroke-width="1"/><rect x="1111.5" y="597.5" width="358" height="194" fill="none" stroke="#a0a0a0" stroke-width="1" shape-rendering="crispEdges"/><text x="1097.5" y="603" font-size="11" text-anchor="end" fill="#000" >51</text><text x="1097.5" y="626" font-size="11" text-anchor="end" fill="#000" >45</text><text x="1097.5" y="645" font-size="11" text-anchor="end" fill="#000" >40</text><text x="1097.5" y="664" font-size="11" text-anchor="end" fill="#000" >35</text><text x="1097.5" y="684" font-size="11" text-anchor="end" fill="#000" >30</text><text x="1097.5" y="703" font-size="11" text-anchor="end" fill="#000" >25</text><text x="1097.5" y="722" font-size="11" text-anchor="end" fill="#000" >20</text><text x="1097.5" y="741" font-size="11" text-anchor="end" fill="#000" >15</text><text x="1097.5" y="760" font-size="11" text-anchor="end" fill="#000" >10</text><text x="1097.5" y="780" font-size="11" text-anchor="end" fill="#000" >5</text><text x="1097.5" y="796" font-size="11" text-anchor="end" fill="#000" >1</text><text x="1111.5" y="808.5" font-size="11" text-anchor="middle" fill="#000" >20</text><text x="1204.1135255745226" y="808.5" font-size="11" text-anchor="middle" fill="#000" >100</text><text x="1336.6135255745226" y="808.5" font-size="11" text-anchor="middle" fill="#000" >1000</text><text x="1469.1135255745226" y="808.5" font-size="11" text-anchor="middle" fill="#000" >10000</text><text x="1290.5" y="824" font-size="11" text-anchor="middle" fill="#000" >Hz</text><text transform="translate(1079.5,696) rotate(-90)" font-size="11" text-anchor="middle">R'I, dB</text><polyline points="1204.1,764.0 1217.4,752.4 1230.6,740.9 1243.9,729.3 1257.1,717.8 1270.4,706.2 1283.6,694.6 1296.9,690.8 1310.1,687.0 1323.4,683.1 1336.6,679.2 1349.9,675.4 1363.1,675.4 1376.4,675.4 1389.6,675.4 1402.9,675.4" fill="none" stroke="#ff1a1a" stroke-width="1.8"/><circle cx="1204.1" cy="764.0" r="2.6" fill="#ff1a1a"/><circle cx="1217.4" cy="752.4" r="2.6" fill="#ff1a1a"/><circle cx="1230.6" cy="740.9" r="2.6" fill="#ff1a1a"/><circle cx="1243.9" cy="729.3" r="2.6" fill="#ff1a1a"/><circle cx="1257.1" cy="717.8" r="2.6" fill="#ff1a1a"/><circle cx="1270.4" cy="706.2" r="2.6" fill="#ff1a1a"/><circle cx="1283.6" cy="694.6" r="2.6" fill="#ff1a1a"/><circle cx="1296.9" cy="690.8" r="2.6" fill="#ff1a1a"/><circle cx="1310.1" cy="687.0" r="2.6" fill="#ff1a1a"/><circle cx="1323.4" cy="683.1" r="2.6" fill="#ff1a1a"/><circle cx="1336.6" cy="679.2" r="2.6" fill="#ff1a1a"/><circle cx="1349.9" cy="675.4" r="2.6" fill="#ff1a1a"/><circle cx="1363.1" cy="675.4" r="2.6" fill="#ff1a1a"/><circle cx="1376.4" cy="675.4" r="2.6" fill="#ff1a1a"/><circle cx="1389.6" cy="675.4" r="2.6" fill="#ff1a1a"/><circle cx="1402.9" cy="675.4" r="2.6" fill="#ff1a1a"/><polyline points="1204.1,756.6 1217.4,769.3 1230.6,754.1 1243.9,741.2 1257.1,697.3 1270.4,700.0 1283.6,716.3 1296.9,697.0 1310.1,692.1 1323.4,619.3 1336.6,652.7 1349.9,684.6 1363.1,691.2 1376.4,664.4 1389.6,683.4 1402.9,675.6" fill="none" stroke="#1b87c5" stroke-width="1.8"/><circle cx="1204.1" cy="756.6" r="2.6" fill="#1b87c5"/><circle cx="1217.4" cy="769.3" r="2.6" fill="#1b87c5"/><circle cx="1230.6" cy="754.1" r="2.6" fill="#1b87c5"/><circle cx="1243.9" cy="741.2" r="2.6" fill="#1b87c5"/><circle cx="1257.1" cy="697.3" r="2.6" fill="#1b87c5"/><circle cx="1270.4" cy="700.0" r="2.6" fill="#1b87c5"/><circle cx="1283.6" cy="716.3" r="2.6" fill="#1b87c5"/><circle cx="1296.9" cy="697.0" r="2.6" fill="#1b87c5"/><circle cx="1310.1" cy="692.1" r="2.6" fill="#1b87c5"/><circle cx="1323.4" cy="619.3" r="2.6" fill="#1b87c5"/><circle cx="1336.6" cy="652.7" r="2.6" fill="#1b87c5"/><circle cx="1349.9" cy="684.6" r="2.6" fill="#1b87c5"/><circle cx="1363.1" cy="691.2" r="2.6" fill="#1b87c5"/><circle cx="1376.4" cy="664.4" r="2.6" fill="#1b87c5"/><circle cx="1389.6" cy="683.4" r="2.6" fill="#1b87c5"/><circle cx="1402.9" cy="675.6" r="2.6" fill="#1b87c5"/><rect x="1441.5" y="597.5" width="27" height="16" fill="#fff" stroke="#a0a0a0" stroke-width="1"/><polyline points="1444,609.5 1455,601.5 1466,609.5" fill="none" stroke="#1b87c5" stroke-width="2"/><circle cx="1444" cy="609.5" r="1.8" fill="#1b87c5"/><circle cx="1455" cy="601.5" r="1.8" fill="#1b87c5"/><circle cx="1466" cy="609.5" r="1.8" fill="#1b87c5"/><text x="1367" y="609.0" font-size="11" text-anchor="start" fill="#000" >R'I</text><rect x="1441.5" y="618.5" width="27" height="16" fill="#fff" stroke="#a0a0a0" stroke-width="1"/><polyline points="1444,630.5 1455,622.5 1466,630.5" fill="none" stroke="#ff1a1a" stroke-width="2"/><circle cx="1444" cy="630.5" r="1.8" fill="#ff1a1a"/><circle cx="1455" cy="622.5" r="1.8" fill="#ff1a1a"/><circle cx="1466" cy="630.5" r="1.8" fill="#ff1a1a"/><text x="1367" y="630.0" font-size="11" text-anchor="start" fill="#000" >Ref. Curve</text></svg>
</body></html>
